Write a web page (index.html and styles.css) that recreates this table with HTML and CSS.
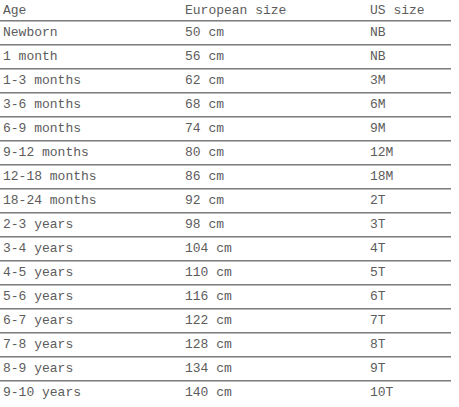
FILE: index.html
```html
<!DOCTYPE html>
<html>
<head>
<meta charset="utf-8">
<link rel="stylesheet" href="styles.css">
</head>
<body>
<div class="sizes" role="table">
  <div class="row head" role="row"><span>Age</span><span>European size</span><span>US size</span></div>
  <div class="row" role="row"><span>Newborn</span><span>50 cm</span><span>NB</span></div>
  <div class="row" role="row"><span>1 month</span><span>56 cm</span><span>NB</span></div>
  <div class="row" role="row"><span>1-3 months</span><span>62 cm</span><span>3M</span></div>
  <div class="row" role="row"><span>3-6 months</span><span>68 cm</span><span>6M</span></div>
  <div class="row" role="row"><span>6-9 months</span><span>74 cm</span><span>9M</span></div>
  <div class="row" role="row"><span>9-12 months</span><span>80 cm</span><span>12M</span></div>
  <div class="row" role="row"><span>12-18 months</span><span>86 cm</span><span>18M</span></div>
  <div class="row" role="row"><span>18-24 months</span><span>92 cm</span><span>2T</span></div>
  <div class="row" role="row"><span>2-3 years</span><span>98 cm</span><span>3T</span></div>
  <div class="row" role="row"><span>3-4 years</span><span>104 cm</span><span>4T</span></div>
  <div class="row" role="row"><span>4-5 years</span><span>110 cm</span><span>5T</span></div>
  <div class="row" role="row"><span>5-6 years</span><span>116 cm</span><span>6T</span></div>
  <div class="row" role="row"><span>6-7 years</span><span>122 cm</span><span>7T</span></div>
  <div class="row" role="row"><span>7-8 years</span><span>128 cm</span><span>8T</span></div>
  <div class="row" role="row"><span>8-9 years</span><span>134 cm</span><span>9T</span></div>
  <div class="row last" role="row"><span>9-10 years</span><span>140 cm</span><span>10T</span></div>
</div>
</body>
</html>
```
FILE: styles.css
```css
html, body {
  margin: 0;
  padding: 0;
  background: #ffffff;
}
.sizes {
  width: 451px;
  font-family: "Courier New", "Liberation Mono", monospace;
  font-size: 13px;
  color: #5c5c5c;
}
.row {
  display: grid;
  grid-template-columns: 182px 185px 84px;
  align-items: center;
  height: 23px;
  border-bottom: 1px solid #7e7e7e;
  box-shadow: 0 1px 0 #b8b8b8;
}
.row span {
  padding-left: 3px;
  line-height: 15px;
  white-space: nowrap;
}
.row.head {
  height: 20px;
}
.row.last {
  border-bottom: none;
  box-shadow: none;
}
```
